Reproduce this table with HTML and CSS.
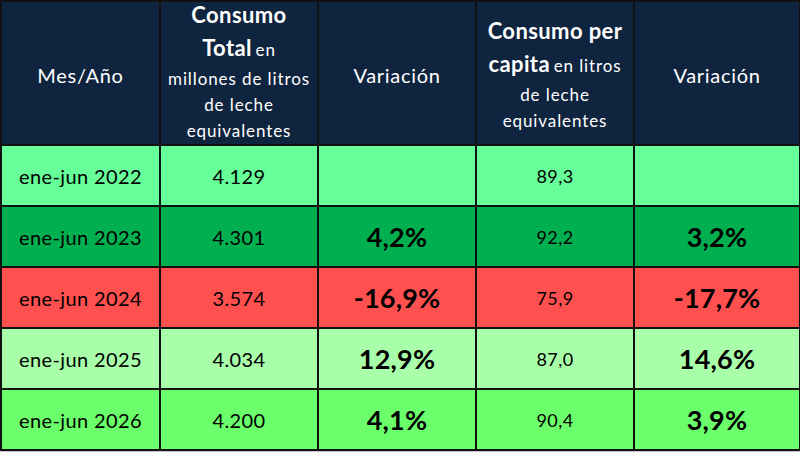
FILE: index.html
```html
<!DOCTYPE html>
<html lang="es">
<head>
<meta charset="utf-8">
<title>Consumo de leche</title>
<link rel="stylesheet" href="styles.css">
</head>
<body>
<table class="grid">
  <colgroup>
    <col class="c1"><col class="c2"><col class="c3"><col class="c4"><col class="c5">
  </colgroup>
  <thead>
    <tr class="head">
      <th><span class="plain">Mes/Año</span></th>
      <th class="multi total">
        <span class="ln l1"><b>Consumo</b></span>
        <span class="ln l2"><b>Total</b> <span class="sm">en</span></span>
        <span class="ln l3"><span class="sm">millones de litros</span></span>
        <span class="ln l4"><span class="sm">de leche</span></span>
        <span class="ln l5"><span class="sm">equivalentes</span></span>
      </th>
      <th><span class="plain">Variación</span></th>
      <th class="multi capita">
        <span class="ln l1"><b>Consumo per</b></span>
        <span class="ln l2"><b>capita</b> <span class="sm">en litros</span></span>
        <span class="ln l4"><span class="sm">de leche</span></span>
        <span class="ln l5"><span class="sm">equivalentes</span></span>
      </th>
      <th><span class="plain">Variación</span></th>
    </tr>
  </thead>
  <tbody>
    <tr class="r1"><td>ene-jun 2022</td><td>4.129</td><td class="pct"></td><td class="pc">89,3</td><td class="pct"></td></tr>
    <tr class="r2"><td>ene-jun 2023</td><td>4.301</td><td class="pct">4,2%</td><td class="pc">92,2</td><td class="pct">3,2%</td></tr>
    <tr class="r3"><td>ene-jun 2024</td><td>3.574</td><td class="pct">-16,9%</td><td class="pc">75,9</td><td class="pct">-17,7%</td></tr>
    <tr class="r4"><td>ene-jun 2025</td><td>4.034</td><td class="pct">12,9%</td><td class="pc">87,0</td><td class="pct">14,6%</td></tr>
    <tr class="r5"><td>ene-jun 2026</td><td>4.200</td><td class="pct">4,1%</td><td class="pc">90,4</td><td class="pct">3,9%</td></tr>
  </tbody>
</table>
</body>
</html>
```
FILE: styles.css
```css
html, body {
  margin: 0;
  padding: 0;
  background: #c8c8c8;
}
body {
  width: 800px;
  height: 452px;
  overflow: hidden;
}
.grid {
  border-collapse: collapse;
  table-layout: fixed;
  width: 799px;
  font-family: Lato, "Liberation Sans", sans-serif;
  color: #000;
}
.c1 { width: 159px; }
.c2 { width: 158px; }
.c3 { width: 158px; }
.c4 { width: 158px; }
.c5 { width: 166px; }
.grid th, .grid td {
  border: 2px solid #111;
  text-align: center;
  vertical-align: middle;
  padding: 0;
}
.head th {
  background: #0f243e;
  color: #fff;
  height: 142px;
  font-weight: normal;
  overflow: hidden;
}
.plain {
  font-size: 20px;
  letter-spacing: 0.7px;
  position: relative;
  top: 2px;
}
.ln {
  display: block;
  white-space: nowrap;
  font-size: 14px;
}
.multi b {
  font-size: 22px;
  line-height: 18px;
  font-weight: bold;
  letter-spacing: 0.4px;
}
.sm {
  font-size: 17px;
  line-height: 16px;
  letter-spacing: 0.9px;
}
.total .l1 { height: 32px; line-height: 32px; }
.total .l2 { height: 33px; line-height: 33px; }
.total .l3 { height: 26px; line-height: 26px; }
.total .l4 { height: 26px; line-height: 26px; }
.total .l5 { height: 25px; line-height: 25px; }
.capita .l1 { height: 33px; line-height: 33px; margin-top: 4px; }
.capita .l2 { height: 33px; line-height: 33px; }
.capita .l4 { height: 26px; line-height: 26px; }
.capita .l5 { height: 25px; line-height: 25px; }
.grid td {
  height: 59px;
  font-size: 20px;
  letter-spacing: 0.4px;
}
.grid td.pc { font-size: 18px; }
.grid td.pct {
  font-size: 27px;
  font-weight: bold;
  letter-spacing: 0.2px;
}
.r1 td { background: #66ff99; }
.r2 td { background: #00b050; }
.r3 td { background: #ff5050; }
.r4 td { background: #a9ffa9; }
.r5 td { background: #6bff6b; }
```
